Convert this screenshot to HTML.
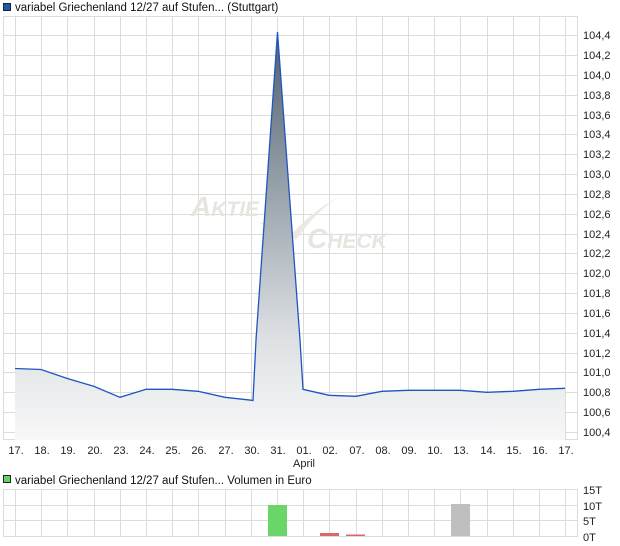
<!DOCTYPE html>
<html><head><meta charset="utf-8"><style>
html,body{margin:0;padding:0;background:#fff;width:620px;height:546px;overflow:hidden}
svg{display:block;font-family:"Liberation Sans",sans-serif}
</style></head><body>
<svg width="620" height="546" viewBox="0 0 620 546" xmlns="http://www.w3.org/2000/svg">
<defs>
<linearGradient id="g" gradientUnits="userSpaceOnUse" x1="0" y1="30" x2="0" y2="440">
<stop offset="0" stop-color="#4d5f6e"/>
<stop offset="0.75" stop-color="#dde0e3"/>
<stop offset="1" stop-color="#f8f8f9"/>
</linearGradient>
</defs>
<rect x="3.5" y="3.5" width="7" height="7" fill="#1f55b3" stroke="#222" stroke-width="1"/>
<text x="15" y="11" font-size="11.5" fill="#111">variabel Griechenland 12/27 auf Stufen... (Stuttgart)</text>
<g stroke="#dcdcdc" stroke-width="1">
<line x1="3" y1="35.5" x2="578" y2="35.5"/><line x1="3" y1="55.5" x2="578" y2="55.5"/><line x1="3" y1="75.5" x2="578" y2="75.5"/><line x1="3" y1="95.5" x2="578" y2="95.5"/><line x1="3" y1="115.5" x2="578" y2="115.5"/><line x1="3" y1="134.5" x2="578" y2="134.5"/><line x1="3" y1="154.5" x2="578" y2="154.5"/><line x1="3" y1="174.5" x2="578" y2="174.5"/><line x1="3" y1="194.5" x2="578" y2="194.5"/><line x1="3" y1="214.5" x2="578" y2="214.5"/><line x1="3" y1="234.5" x2="578" y2="234.5"/><line x1="3" y1="253.5" x2="578" y2="253.5"/><line x1="3" y1="273.5" x2="578" y2="273.5"/><line x1="3" y1="293.5" x2="578" y2="293.5"/><line x1="3" y1="313.5" x2="578" y2="313.5"/><line x1="3" y1="333.5" x2="578" y2="333.5"/><line x1="3" y1="353.5" x2="578" y2="353.5"/><line x1="3" y1="372.5" x2="578" y2="372.5"/><line x1="3" y1="392.5" x2="578" y2="392.5"/><line x1="3" y1="412.5" x2="578" y2="412.5"/><line x1="3" y1="432.5" x2="578" y2="432.5"/>
<line x1="15.5" y1="16" x2="15.5" y2="440"/><line x1="41.5" y1="16" x2="41.5" y2="440"/><line x1="67.5" y1="16" x2="67.5" y2="440"/><line x1="94.5" y1="16" x2="94.5" y2="440"/><line x1="120.5" y1="16" x2="120.5" y2="440"/><line x1="146.5" y1="16" x2="146.5" y2="440"/><line x1="172.5" y1="16" x2="172.5" y2="440"/><line x1="198.5" y1="16" x2="198.5" y2="440"/><line x1="225.5" y1="16" x2="225.5" y2="440"/><line x1="251.5" y1="16" x2="251.5" y2="440"/><line x1="277.5" y1="16" x2="277.5" y2="440"/><line x1="303.5" y1="16" x2="303.5" y2="440"/><line x1="329.5" y1="16" x2="329.5" y2="440"/><line x1="356.5" y1="16" x2="356.5" y2="440"/><line x1="382.5" y1="16" x2="382.5" y2="440"/><line x1="408.5" y1="16" x2="408.5" y2="440"/><line x1="434.5" y1="16" x2="434.5" y2="440"/><line x1="460.5" y1="16" x2="460.5" y2="440"/><line x1="487.5" y1="16" x2="487.5" y2="440"/><line x1="513.5" y1="16" x2="513.5" y2="440"/><line x1="539.5" y1="16" x2="539.5" y2="440"/><line x1="565.5" y1="16" x2="565.5" y2="440"/>
</g>
<rect x="3.5" y="16.5" width="574" height="423" fill="none" stroke="#dcdcdc"/>
<text x="191" y="216" font-size="28" font-style="italic" fill="#e8e4df" font-weight="bold">A<tspan font-size="21">KTIE</tspan></text>
<text x="307" y="248" font-size="28" font-style="italic" fill="#e8e4df" font-weight="bold">C<tspan font-size="21">HECK</tspan></text>
<path d="M256 222 Q288 232 296 240 Q315 212 340 196 Q310 213 294 232 Q283 226 256 222Z" fill="#ebe7e2"/>
<path d="M15 368.5 L41 369.5 L67 378.4 L94 386.4 L120 397.3 L146 389.3 L172 389.3 L198 391.3 L225 397.3 L251 400.2 L253 400.5 L256 340 L277.5 32 L300 340 L303 389.3 L329 395.3 L356 396.3 L382 391.3 L408 390.3 L434 390.3 L460 390.3 L487 392.3 L513 391.3 L539 389.3 L565 388.3 L565 440 L15 440Z" fill="url(#g)"/>
<path d="M15 368.5 L41 369.5 L67 378.4 L94 386.4 L120 397.3 L146 389.3 L172 389.3 L198 391.3 L225 397.3 L251 400.2 L253 400.5 L256 340 L277.5 32 L300 340 L303 389.3 L329 395.3 L356 396.3 L382 391.3 L408 390.3 L434 390.3 L460 390.3 L487 392.3 L513 391.3 L539 389.3 L565 388.3" fill="none" stroke="#1f55c0" stroke-width="1.3"/>
<g font-size="11" fill="#222">
<text x="583" y="39">104,4</text><text x="583" y="79">104,0</text><text x="583" y="59">104,2</text><text x="583" y="99">103,8</text><text x="583" y="119">103,6</text><text x="583" y="138">103,4</text><text x="583" y="158">103,2</text><text x="583" y="178">103,0</text><text x="583" y="198">102,8</text><text x="583" y="218">102,6</text><text x="583" y="238">102,4</text><text x="583" y="257">102,2</text><text x="583" y="277">102,0</text><text x="583" y="297">101,8</text><text x="583" y="317">101,6</text><text x="583" y="337">101,4</text><text x="583" y="357">101,2</text><text x="583" y="376">101,0</text><text x="583" y="396">100,8</text><text x="583" y="416">100,6</text><text x="583" y="436">100,4</text>
</g>
<g font-size="11" fill="#222" text-anchor="middle">
<text x="16" y="454">17.</text><text x="42" y="454">18.</text><text x="68" y="454">19.</text><text x="95" y="454">20.</text><text x="121" y="454">23.</text><text x="147" y="454">24.</text><text x="173" y="454">25.</text><text x="199" y="454">26.</text><text x="226" y="454">27.</text><text x="252" y="454">30.</text><text x="278" y="454">31.</text><text x="304" y="454">01.</text><text x="330" y="454">02.</text><text x="357" y="454">07.</text><text x="383" y="454">08.</text><text x="409" y="454">09.</text><text x="435" y="454">10.</text><text x="461" y="454">13.</text><text x="488" y="454">14.</text><text x="514" y="454">15.</text><text x="540" y="454">16.</text><text x="566" y="454">17.</text>
<text x="304" y="467">April</text>
</g>
<rect x="3.5" y="475.5" width="7" height="7" fill="#66d366" stroke="#222"/>
<text x="15" y="484" font-size="11.5" fill="#111">variabel Griechenland 12/27 auf Stufen... Volumen in Euro</text>
<g stroke="#dcdcdc" stroke-width="1">
<line x1="3" y1="505.5" x2="578" y2="505.5"/><line x1="3" y1="520.5" x2="578" y2="520.5"/>
<line x1="15.5" y1="489" x2="15.5" y2="536"/><line x1="41.5" y1="489" x2="41.5" y2="536"/><line x1="67.5" y1="489" x2="67.5" y2="536"/><line x1="94.5" y1="489" x2="94.5" y2="536"/><line x1="120.5" y1="489" x2="120.5" y2="536"/><line x1="146.5" y1="489" x2="146.5" y2="536"/><line x1="172.5" y1="489" x2="172.5" y2="536"/><line x1="198.5" y1="489" x2="198.5" y2="536"/><line x1="225.5" y1="489" x2="225.5" y2="536"/><line x1="251.5" y1="489" x2="251.5" y2="536"/><line x1="277.5" y1="489" x2="277.5" y2="536"/><line x1="303.5" y1="489" x2="303.5" y2="536"/><line x1="329.5" y1="489" x2="329.5" y2="536"/><line x1="356.5" y1="489" x2="356.5" y2="536"/><line x1="382.5" y1="489" x2="382.5" y2="536"/><line x1="408.5" y1="489" x2="408.5" y2="536"/><line x1="434.5" y1="489" x2="434.5" y2="536"/><line x1="460.5" y1="489" x2="460.5" y2="536"/><line x1="487.5" y1="489" x2="487.5" y2="536"/><line x1="513.5" y1="489" x2="513.5" y2="536"/><line x1="539.5" y1="489" x2="539.5" y2="536"/><line x1="565.5" y1="489" x2="565.5" y2="536"/>
</g>
<rect x="3.5" y="489.5" width="574" height="47" fill="none" stroke="#dcdcdc"/>
<rect x="268" y="505" width="19" height="31" fill="#6ad66a"/>
<rect x="320" y="533" width="19" height="3" fill="#d86a66"/>
<rect x="346" y="534.5" width="19" height="1.5" fill="#d86a66"/>
<rect x="451" y="504" width="19" height="32" fill="#bfbfbf"/>
<g font-size="11" fill="#222">
<text x="583" y="494">15T</text><text x="583" y="510">10T</text><text x="583" y="525">5T</text><text x="583" y="541">0T</text>
</g>
</svg>
</body></html>
